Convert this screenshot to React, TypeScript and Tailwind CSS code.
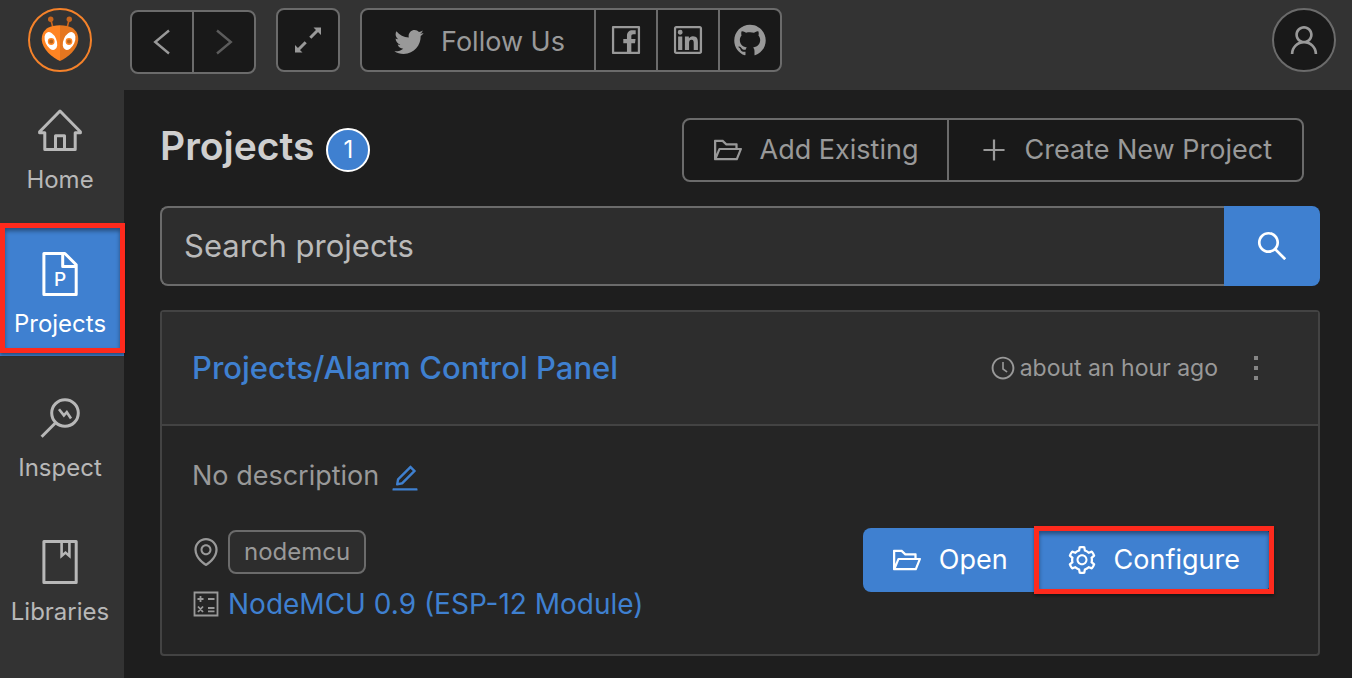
import type { ReactNode } from 'react';
import {
  AiOutlineClockCircle,
  AiOutlineEdit,
  AiOutlineEnvironment,
  AiOutlineFacebook,
  AiOutlineFolderOpen,
  AiOutlineGithub,
  AiOutlineLinkedin,
  AiOutlinePlus,
  AiOutlineSearch,
  AiOutlineSetting,
  AiOutlineTwitter,
  AiOutlineUser,
} from 'react-icons/ai';

function Logo() {
  return (
    <svg viewBox="0 0 64 64" className="size-16" role="img" aria-label="PlatformIO">
      <circle cx="32" cy="32" r="31" fill="none" stroke="#f5822a" strokeWidth="2" />
      <path d="M22.7 11 25 20M41.3 11 39 20" stroke="#c9651c" strokeWidth="1.6" />
      <circle cx="22.7" cy="11.2" r="2.7" fill="#c9651c" />
      <circle cx="41.3" cy="11.2" r="2.7" fill="#c9651c" />
      <path d="M32 17.2c-5 0-9 .8-12 2.6-4.5 2.8-6.6 7.2-6.2 12.4C14.5 41 24 49.5 32 53z" fill="#ff8423" />
      <path d="M32 17.2c5 0 9 .8 12 2.6 4.5 2.8 6.6 7.2 6.2 12.4C49.5 41 40 49.500 32 53z" fill="#e5761f" />
      <ellipse cx="22.9" cy="33" rx="5.6" ry="9.4" transform="rotate(-24 22.9 33)" fill="#fff" />
      <ellipse cx="41.1" cy="33" rx="5.6" ry="9.4" transform="rotate(24 41.1 33)" fill="#fff" />
      <circle cx="23.2" cy="33.5" r="2.7" fill="#b5651d" stroke="#ff8423" strokeWidth="1.4" />
      <circle cx="41" cy="33.5" r="2.7" fill="#b5651d" stroke="#ff8423" strokeWidth="1.4" />
    </svg>
  );
}

const navIcon = {
  viewBox: '0 0 48 48',
  className: 'size-12',
  fill: 'none',
  stroke: 'currentColor',
  strokeWidth: 3,
  strokeLinejoin: 'round' as const,
  'aria-hidden': true,
};

function HomeIcon() {
  return (
    <svg {...navIcon}>
      <path d="M8.8 26.700H3.6v-1L24 5l20.4 20.700v1h-5.2v16.900H8.8z" />
      <path d="M19.5 43V29.800h9V43" />
    </svg>
  );
}

function ProjectsIcon() {
  return (
    <svg {...navIcon}>
      <path d="M7.9 3.500h21L40.2 14.800v29.700H7.900z" />
      <path d="M26.7 3.500v12.900h13.500" />
      <text x="24" y="36" textAnchor="middle" fontSize="19" fontWeight="500" fill="currentColor" stroke="none">
        P
      </text>
    </svg>
  );
}

function InspectIcon() {
  return (
    <svg {...navIcon}>
      <circle cx="29" cy="19" r="13.300" />
      <path d="M19.4 29 5.600 42.800" />
      <path d="m23 15.200 4.900 6.200 2.900-3.200 4.200 6.200" strokeWidth="2.600" strokeLinejoin="miter" />
    </svg>
  );
}

function LibrariesIcon() {
  return (
    <svg {...navIcon}>
      <path d="M7.9 3.500h32.300v41H7.900z" />
      <path d="M25.6 4v14l3.900-3.400 3.900 3.400V4" strokeWidth="2.600" strokeLinejoin="miter" />
    </svg>
  );
}

function Chevron({ flip }: { flip?: boolean }) {
  return (
    <svg viewBox="0 0 32 32" className="size-8" fill="none" stroke="currentColor" strokeWidth="2.400" aria-hidden>
      <path d={flip ? 'm9 4.500 13.800 11.500L9 27.500' : 'M23 4.500 9.200 16 23 27.500'} />
    </svg>
  );
}

function ExpandIcon() {
  return (
    <svg viewBox="0 0 32 32" className="size-8" fill="currentColor" aria-hidden>
      <path d="M21.5 3.500H29V11zM10.500 28.500H3V21z" />
      <path d="m18.3 13.700 7.700-7.700M13.700 18.300 6 26" stroke="currentColor" strokeWidth="3" />
    </svg>
  );
}

function BoardIcon() {
  return (
    <svg viewBox="0 0 26 26" className="size-6.5" fill="none" stroke="currentColor" strokeWidth="1.800" aria-hidden>
      <path d="M1.500 1.500h23v23h-23z" />
      <path d="M4.500 8h6M7.500 5v6M15 8h6.500M5 15.500l5 5.500M10 15.500 5 21M15 17h6.500M15 20.300h6.500" />
    </svg>
  );
}

/** Red frame that calls attention to the element it is placed in. */
function Highlight({ className }: { className: string }) {
  return (
    <span
      aria-hidden
      className={`pointer-events-none absolute border-[5px] border-[#fe2a1d] shadow-[inset_0_3px_4px_rgba(0,0,0,0.4),0_2px_3px_rgba(0,0,0,0.4)] ${className}`}
    />
  );
}

function NavItem({ icon, label, active }: { icon: ReactNode; label: string; active?: boolean }) {
  return (
    <li>
      <a
        href={`#${label.toLowerCase()}`}
        aria-current={active ? 'page' : undefined}
        className={`relative flex h-32 flex-col items-center gap-2.5 pt-5.5 pr-1 text-2xl leading-8 ${
          active ? 'bg-[#3f80d0] text-white' : 'text-[#b8b8b8]'
        }`}
      >
        {icon}
        {label}
        {active && <Highlight className="-top-[5px] -right-px bottom-[3px] left-0" />}
      </a>
    </li>
  );
}

const box = 'border-2 border-[#6b6b6b] bg-[#191919] text-[#999]';
const cell = 'flex h-full items-center justify-center';

export default function App() {
  return (
    <div className="flex min-h-screen bg-[#1e1e1e] font-['Inter','Liberation_Sans',sans-serif]">
      <nav className="w-31 shrink-0 bg-[#333]" aria-label="Main">
        <a href="#top" className="flex h-21 justify-center pt-2 pr-1">
          <Logo />
        </a>
        <ul className="flex flex-col gap-4">
          <NavItem icon={<HomeIcon />} label="Home" />
          <NavItem icon={<ProjectsIcon />} label="Projects" active />
          <NavItem icon={<InspectIcon />} label="Inspect" />
          <NavItem icon={<LibrariesIcon />} label="Libraries" />
        </ul>
      </nav>

      <div className="min-w-0 flex-1">
        <header className="flex h-[90px] items-start gap-5 bg-[#333] pt-2 pr-4 pl-1.5">
          <div className={`mt-0.5 flex h-16 rounded-lg ${box}`}>
            <button aria-label="Back" className={`w-15 ${cell}`}>
              <Chevron />
            </button>
            <button aria-label="Forward" disabled className={`w-15.5 border-l-2 border-[#6b6b6b] text-[#5c5c5c] ${cell}`}>
              <Chevron flip />
            </button>
          </div>
          <button aria-label="Full screen" className={`flex size-16 items-center justify-center rounded-lg ${box}`}>
            <ExpandIcon />
          </button>
          <div className={`flex h-16 rounded-lg ${box}`}>
            <a href="#twitter" className={`w-[232px] gap-3.5 pt-1 text-[27px] ${cell}`}>
              <AiOutlineTwitter className="size-9" />
              Follow Us
            </a>
            <a href="#facebook" aria-label="Facebook" className={`w-15.5 border-l-2 border-[#6b6b6b] ${cell}`}>
              <AiOutlineFacebook className="size-9" />
            </a>
            <a href="#linkedin" aria-label="LinkedIn" className={`w-15.5 border-l-2 border-[#6b6b6b] ${cell}`}>
              <AiOutlineLinkedin className="size-9" />
            </a>
            <a href="#github" aria-label="GitHub" className={`w-15.5 border-l-2 border-[#6b6b6b] ${cell}`}>
              <AiOutlineGithub className="size-9" />
            </a>
          </div>
          <button aria-label="Account" className={`ml-auto flex size-16 items-center justify-center rounded-full ${box}`}>
            <AiOutlineUser className="size-9" />
          </button>
        </header>

        <main className="flex flex-col gap-6 pt-7 pr-8 pb-5.5 pl-9">
          <div className="flex h-16 items-center justify-between pr-4">
            <div className="flex items-center gap-3">
              <h1 className="pb-2 text-[39px] leading-12 font-semibold text-[#cfcfcf]">Projects</h1>
              <span className="flex size-11 items-center justify-center rounded-full border-2 border-white bg-[#3f80d0] text-2xl text-white">
                1
              </span>
            </div>
            <div className={`flex h-16 rounded-lg text-[27px] ${box}`}>
              <button className={`gap-4 px-7 ${cell}`}>
                <AiOutlineFolderOpen className="size-8" />
                Add Existing
              </button>
              <button className={`gap-4 border-l-2 border-[#6b6b6b] px-7.5 ${cell}`}>
                <AiOutlinePlus className="size-7.5" />
                Create New Project
              </button>
            </div>
          </div>

          <form className="flex h-20" onSubmit={(e) => e.preventDefault()}>
            <input
              type="search"
              aria-label="Search projects"
              placeholder="Search projects"
              className="min-w-0 flex-1 rounded-l-lg border-2 border-r-0 border-[#6b6b6b] bg-[#2d2d2d] px-5.5 text-[31px] text-[#ccc] placeholder-[#bababa] outline-none"
            />
            <button aria-label="Search" className="flex w-24 items-center justify-center rounded-r-lg bg-[#3f80d0] text-white">
              <AiOutlineSearch className="size-9" />
            </button>
          </form>

          <article className="rounded border-2 border-[#434343] bg-[#252525]">
            <header className="flex h-[114px] items-center justify-between border-b-2 border-[#434343] bg-[#2d2d2d] pr-12 pl-7.5">
              <h2 className="text-[31px] font-medium">
                <a href="#project" className="text-[#3f80d0]">
                  Projects/Alarm Control Panel
                </a>
              </h2>
              <div className="flex items-center gap-1 text-[23px] text-[#999]">
                <AiOutlineClockCircle className="size-6.5" />
                <span>about an hour ago</span>
                <button aria-label="More actions" className="ml-5 flex h-8 w-7 flex-col items-center justify-center gap-1.5 text-[#868686]">
                  <span className="size-1 bg-current" />
                  <span className="size-1 bg-current" />
                  <span className="size-1 bg-current" />
                </button>
              </div>
            </header>
            <div className="flex items-end justify-between pt-7 pr-12 pb-7 pl-7.5">
              <div className="text-[28px] leading-11 text-[#999]">
                <p className="flex items-center gap-2.5 text-[27px]">
                  No description
                  <button aria-label="Edit description" className="pt-1 text-[#3f80d0]">
                    <AiOutlineEdit className="size-8" />
                  </button>
                </p>
                <p className="mt-8 flex items-center gap-2">
                  <span className="flex w-7 justify-center">
                    <AiOutlineEnvironment className="size-8 shrink-0" />
                  </span>
                  <span className="flex h-11 items-center rounded-lg border-2 border-[#6b6b6b] bg-[#2d2d2d] px-3.5 text-2xl">
                    nodemcu
                  </span>
                </p>
                <p className="mt-2 flex items-center gap-2">
                  <span className="flex w-7 justify-center">
                    <BoardIcon />
                  </span>
                  <a href="#board" className="text-[#3f80d0]">
                    NodeMCU 0.9 (ESP-12 Module)
                  </a>
                </p>
              </div>
              <div className="mb-8.5 flex h-16 text-[27px] text-white">
                <button className={`gap-4 rounded-l-lg bg-[#3f80d0] px-7 ${cell}`}>
                  <AiOutlineFolderOpen className="size-8" />
                  Open
                </button>
                <button className={`relative gap-4 rounded-r-lg bg-[#3f80d0] px-7.5 ${cell}`}>
                  <AiOutlineSetting className="size-8" />
                  Configure
                  <Highlight className="-top-0.5 -right-1 -bottom-0.5 -left-0.5" />
                </button>
              </div>
            </div>
          </article>
        </main>
      </div>
    </div>
  );
}
